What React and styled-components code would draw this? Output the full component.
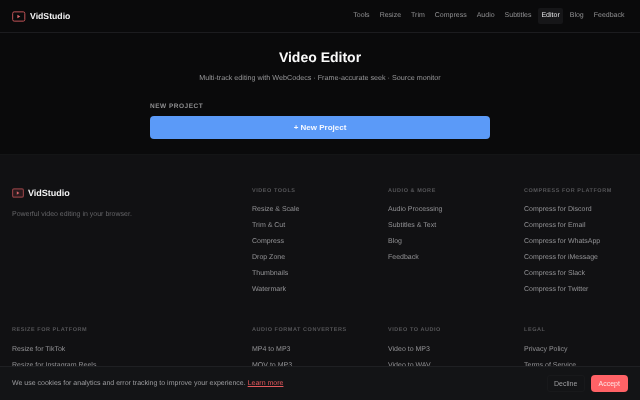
import React from "react";
import styled, { createGlobalStyle } from "styled-components";

const Global = createGlobalStyle`
  html, body { margin: 0; padding: 0; height: 400px; overflow: hidden; background: #0a0a0b; }
  body { font-family: "Liberation Sans", Arial, sans-serif; color: #fff; text-rendering: geometricPrecision; }
  #root { will-change: transform; height: 400px; overflow: hidden; }
  * { box-sizing: border-box; }
  a { text-decoration: none; }
`;

const Header = styled.header`
  height: 33px;
  display: flex;
  align-items: center;
  justify-content: space-between;
  padding: 0 12px;
  border-bottom: 1px solid #1c1c1f;
  background: #0a0a0b;
`;
const Brand = styled.div`
  display: flex;
  align-items: center;
  gap: ${(p) => p.$gap}px;
  font-weight: 700;
  font-size: ${(p) => p.$size}px;
  line-height: 11px;
  color: #f2f2f3;
`;
const Nav = styled.nav`
  display: flex;
  align-items: center;
  gap: 3px;
`;
const NavLink = styled.a`
  font-size: 7px;
  line-height: 8px;
  padding: 4px 3.5px;
  border-radius: 2px;
  color: ${(p) => (p.$active ? "#e6e6e8" : "#909092")};
  background: ${(p) => (p.$active ? "#161618" : "transparent")};
`;
const Main = styled.main`
  height: 121px;
  padding-top: 16px;
  display: flex;
  flex-direction: column;
  align-items: center;
  background: #0a0a0b;
`;
const Title = styled.h1`
  margin: 0;
  font-size: 14px;
  line-height: 16px;
  font-weight: 700;
  color: #fafafa;
`;
const Sub = styled.p`
  margin: 9px 0 0;
  font-size: 7.2px;
  line-height: 8px;
  color: #969698;
`;
const Section = styled.section`
  width: 340px;
  margin-top: 20.5px;
`;
const Label = styled.div`
  font-size: 6.5px;
  line-height: 7px;
  font-weight: 700;
  letter-spacing: 0.5px;
  color: #8f8f91;
  text-transform: uppercase;
`;
const Primary = styled.button`
  display: block;
  width: 100%;
  height: 23px;
  margin-top: 6px;
  border: 0;
  border-radius: 4px;
  background: #5b9af8;
  color: #f5f8ff;
  font: 700 8px "Liberation Sans", Arial, sans-serif;
`;
const Footer = styled.footer`
  background: #111113;
  border-top: 1px solid #141516;
  padding: 32.5px 12px 0;
  display: grid;
  grid-template-columns: 2fr 1fr 1fr 1fr;
  column-gap: 32px;
  row-gap: 25px;
`;
const Col = styled.div`
  display: flex;
  flex-direction: column;
`;
const Tagline = styled.p`
  margin: 11.5px 0 0;
  font-size: 7px;
  line-height: 10px;
  color: #646467;
`;
const ColTitle = styled.h4`
  margin: 0 0 11.5px;
  font-size: 5.5px;
  line-height: 7px;
  font-weight: 700;
  letter-spacing: 0.55px;
  text-transform: uppercase;
  color: #565659;
`;
const FootLink = styled.a`
  font-size: 7px;
  line-height: 8px;
  margin-bottom: 8px;
  color: #929295;
`;
const Cookie = styled.div`
  position: fixed;
  left: 0;
  right: 0;
  bottom: 0;
  height: 34px;
  padding: 0 12px;
  display: flex;
  align-items: center;
  justify-content: space-between;
  background: #131416;
  border-top: 1px solid #1f2023;
`;
const CookieText = styled.span`
  font-size: 7px;
  color: #9c9c9f;
`;
const Learn = styled.a`
  color: #e5585c;
  text-decoration: underline;
`;
const CookieActions = styled.div`
  display: flex;
  gap: 5.5px;
`;
const Decline = styled.button`
  height: 17px;
  width: 38.5px;
  border: 1px solid #18191b;
  border-radius: 3px;
  background: transparent;
  color: #9c9c9f;
  font: 7px "Liberation Sans", Arial, sans-serif;
`;
const Accept = styled.button`
  height: 17px;
  width: 37.5px;
  border: 0;
  border-radius: 4px;
  background: #ff6266;
  color: #ffe3e4;
  font: 7px "Liberation Sans", Arial, sans-serif;
`;

const Logo = ({ dim }) => (
  <svg width={dim ? 12 : 13.5} height={dim ? 10 : 11} viewBox="0 0 14 11" fill="none">
    <rect x="0.7" y="0.7" width="12.6" height="9.6" rx="1.6" stroke={dim ? "#8a3e42" : "#c9565b"} strokeWidth={dim ? 1.4 : 1} fill={dim ? "#2a1a1d" : "none"} />
    <path d="M5.6 3.6 L8.6 5.5 L5.6 7.4 Z" fill={dim ? "#d8666a" : "#e0686c"} />
  </svg>
);

const nav = ["Tools", "Resize", "Trim", "Compress", "Audio", "Subtitles", "Editor", "Blog", "Feedback"];
const cols = [
  ["Video Tools", ["Resize & Scale", "Trim & Cut", "Compress", "Drop Zone", "Thumbnails", "Watermark"]],
  ["Audio & More", ["Audio Processing", "Subtitles & Text", "Blog", "Feedback"]],
  ["Compress for Platform", ["Compress for Discord", "Compress for Email", "Compress for WhatsApp", "Compress for iMessage", "Compress for Slack", "Compress for Twitter"]],
  ["Resize for Platform", ["Resize for TikTok", "Resize for Instagram Reels"]],
  ["Audio Format Converters", ["MP4 to MP3", "MOV to MP3"]],
  ["Video to Audio", ["Video to MP3", "Video to WAV"]],
  ["Legal", ["Privacy Policy", "Terms of Service"]],
];
const Column = ({ c }) => (
  <Col>
    <ColTitle>{c[0]}</ColTitle>
    {c[1].map((l) => <FootLink key={l}>{l}</FootLink>)}
  </Col>
);

export default function App() {
  return (
    <>
      <Global />
      <Header>
        <Brand $gap={4.5} $size={8.7}><Logo />VidStudio</Brand>
        <Nav>
          {nav.map((n) => <NavLink key={n} $active={n === "Editor"}>{n}</NavLink>)}
        </Nav>
      </Header>
      <Main>
        <Title>Video Editor</Title>
        <Sub>Multi-track editing with WebCodecs · Frame-accurate seek · Source monitor</Sub>
        <Section>
          <Label>New Project</Label>
          <Primary>+ New Project</Primary>
        </Section>
      </Main>
      <Footer>
        <Col>
          <Brand $gap={4} $size={9}><Logo dim />VidStudio</Brand>
          <Tagline>Powerful video editing in your browser.</Tagline>
        </Col>
        {cols.map((c) => <Column key={c[0]} c={c} />)}
      </Footer>
      <Cookie>
        <CookieText>We use cookies for analytics and error tracking to improve your experience. <Learn>Learn more</Learn></CookieText>
        <CookieActions>
          <Decline>Decline</Decline>
          <Accept>Accept</Accept>
        </CookieActions>
      </Cookie>
    </>
  );
}
